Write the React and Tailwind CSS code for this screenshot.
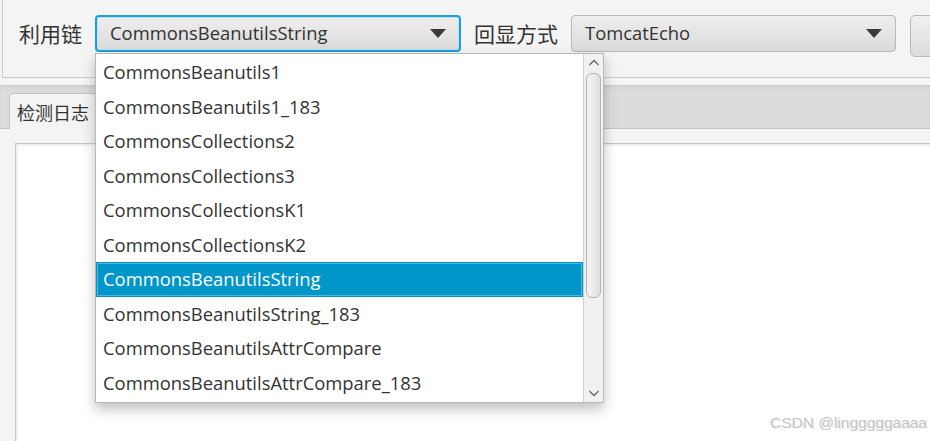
import React from "react";

const latin = "font-['Open_Sans','Noto_Sans_CJK_SC',sans-serif]";

const chains = [
  "CommonsBeanutils1",
  "CommonsBeanutils1_183",
  "CommonsCollections2",
  "CommonsCollections3",
  "CommonsCollectionsK1",
  "CommonsCollectionsK2",
  "CommonsBeanutilsString",
  "CommonsBeanutilsString_183",
  "CommonsBeanutilsAttrCompare",
  "CommonsBeanutilsAttrCompare_183",
];

function Arrow() {
  return (
    <svg width="16" height="9" viewBox="0 0 16 9" className="shrink-0">
      <path d="M0 0 L16 0 L8 9 Z" fill="#3a3a3a" />
    </svg>
  );
}

function Combo({ value, focused, className }) {
  return (
    <div
      className={`shrink-0 flex items-center justify-between h-[37px] rounded-[4px] bg-gradient-to-b from-[#eeeeee] to-[#dadada] pl-[13px] pr-[13px] text-[18.4px] text-[#333] ${
        focused ? "border-2 border-[#1b9fd6] shadow-[inset_0_0_0_1px_#bfe3f3]" : "border border-[#b8b8b8]"
      } ${className}`}
    >
      <span className="leading-none whitespace-nowrap">{value}</span>
      <Arrow />
    </div>
  );
}

export default function App() {
  return (
    <div className={`relative w-[930px] h-[441px] overflow-hidden bg-[#f4f4f4] ${latin}`}>
      {/* toolbar */}
      <div className="ml-[2px] h-[78px] border-l border-b border-[#c9c9c9] flex items-start pt-[15px] pl-[16px] gap-[13px] overflow-hidden">
        <span className="shrink-0 whitespace-nowrap text-[21px] text-[#333] leading-[37px] font-['Noto_Sans_CJK_SC',sans-serif]">利用链</span>
        <Combo value="CommonsBeanutilsString" focused className="w-[366px]" />
        <span className="shrink-0 whitespace-nowrap text-[21px] text-[#333] leading-[37px] font-['Noto_Sans_CJK_SC',sans-serif]">回显方式</span>
        <Combo value="TomcatEcho" className="w-[325px]" />
        <div className="shrink-0 w-[40px] h-[42px] ml-[1px] rounded-[5px] border border-[#b8b8b8] bg-gradient-to-b from-[#f0f0f0] to-[#dcdcdc]" />
      </div>

      {/* tab pane */}
      <div className="mt-[7px] h-[44px] bg-[#dcdcdc] shadow-[inset_0_3px_4px_-2px_#c4c4c4] border-b border-[#c4c4c4] flex items-end pl-[9px]">
        <div className="h-[36px] w-[120px] rounded-t-[4px] border border-b-0 border-[#c4c4c4] bg-[#f4f4f4] pl-[7px] pt-[5px] text-[18px] text-[#333] font-['Noto_Sans_CJK_SC',sans-serif] leading-[26px] -mb-px relative">
          检测日志
        </div>
      </div>
      <div className="pt-[14px] pl-[15px]">
        <div className="h-[300px] bg-white border-l border-t border-[#c8c8c8] shadow-[inset_2px_2px_3px_-1px_#e4e4e4]" />
      </div>

      {/* dropdown list */}
      <div className="absolute left-[95px] top-[53px] w-[509px] h-[350px] bg-white border border-[#b9b9b9] shadow-[0_6px_12px_rgba(0,0,0,0.25)] flex">
        <div className="flex-1 flex flex-col pt-px">
          {chains.map((c) => {
            const sel = c === "CommonsBeanutilsString";
            return (
              <div
                key={c}
                className={`h-[34.5px] flex items-center pl-[7px] text-[18.4px] whitespace-nowrap ${
                  sel ? "bg-[#0096c9] text-white shadow-[inset_0_0_0_1px_#0493c4,inset_0_0_0_2px_#4db6dc]" : "text-[#333]"
                }`}
              >
                {c}
              </div>
            );
          })}
        </div>
        {/* scrollbar */}
        <div className="w-[20px] border-l border-[#cfcfcf] bg-[#f1f1f1] flex flex-col items-center">
          <svg width="12" height="14" viewBox="0 0 12 14" className="mt-[2px]">
            <path d="M1.5 9 L6 4.5 L10.5 9" stroke="#666" strokeWidth="1.3" fill="none" />
          </svg>
          <div className="mt-[3px] w-[15px] h-[225px] rounded-[6px] border border-[#b4b4b4] bg-gradient-to-r from-[#f6f6f6] to-[#dedede]" />
          <div className="flex-1" />
          <svg width="12" height="14" viewBox="0 0 12 14" className="mb-[2px]">
            <path d="M1.5 5 L6 9.5 L10.5 5" stroke="#666" strokeWidth="1.3" fill="none" />
          </svg>
        </div>
      </div>

      {/* watermark */}
      <div className="absolute right-[3px] bottom-[7px] text-[15.5px] text-[#c4c4c4] font-['Liberation_Sans',sans-serif] [text-shadow:0_1px_0_#fff,1px_1px_1px_#e0e0e0]">
        CSDN @lingggggaaaa
      </div>
    </div>
  );
}
